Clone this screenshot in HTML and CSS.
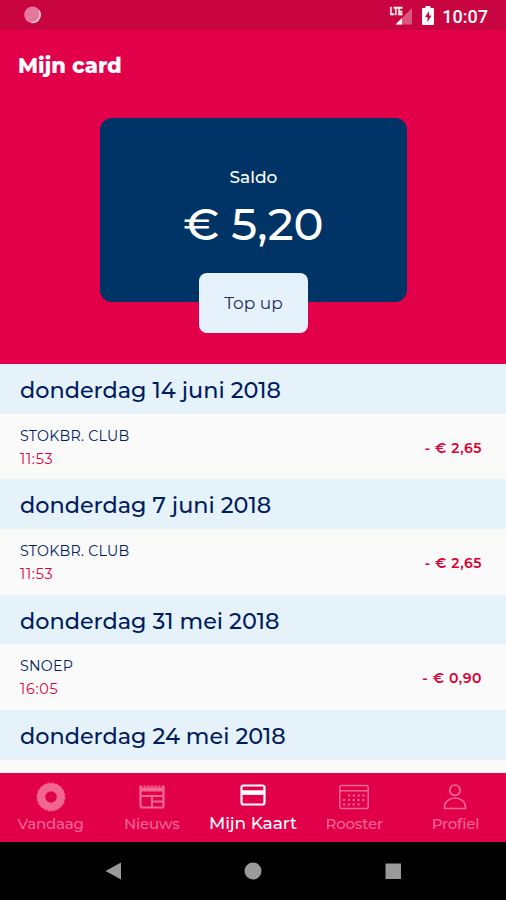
FILE: index.html
```
<!DOCTYPE html>
<html lang="nl">
  <head>
    <meta charset="UTF-8" />
    <meta name="viewport" content="width=device-width, initial-scale=1.0" />
    <title>Mijn card</title>
    <link rel="stylesheet" href="styles.css" />
  </head>
  <body>
    <div class="status">
      <svg width="18" height="18" viewBox="0 0 18 18">
        <circle cx="8.500" cy="8.800" r="8.300" fill="#e5799d" />
        <path d="M15 4.500A8 8 0 0 1 7.500 16.500" fill="none" stroke="#f8d3de" stroke-width="1.400" />
      </svg>
      <div class="status-right">
        <svg width="24" height="20" viewBox="0 0 24 20">
          <path d="M23 2v16.500H6.500z" fill="#dc5580" />
          <path d="M13 12v6.500H6.500z" fill="#fff" />
          <text class="lte" x="1" y="8.500" textLength="12.500" lengthAdjust="spacingAndGlyphs">LTE</text>
        </svg>
        <svg class="battery" width="12" height="19" viewBox="0 0 12 19">
          <path d="M3.500 0h5v2H11q1 0 1 1v15q0 1-1 1H1q-1 0-1-1V3q0-1 1-1h2.500z" fill="#fff" />
          <path d="M7 5L3 11h2.500v5L9.500 9.500H7z" fill="#c90541" />
        </svg>
        <span class="clock">10:07</span>
      </div>
    </div>

    <div class="header">
      <h1>Mijn card</h1>
      <div class="card">
        <div class="saldo">Saldo</div>
        <div class="amount">€ 5,20</div>
        <button class="topup">Top up</button>
      </div>
    </div>

    <div class="list">
      <h2>donderdag 14 juni 2018</h2>
      <div class="row">
        <div>
          <div class="name">STOKBR. CLUB</div>
          <div class="time">11:53</div>
        </div>
        <div class="price">- € 2,65</div>
      </div>
      <h2>donderdag 7 juni 2018</h2>
      <div class="row">
        <div>
          <div class="name">STOKBR. CLUB</div>
          <div class="time">11:53</div>
        </div>
        <div class="price">- € 2,65</div>
      </div>
      <h2>donderdag 31 mei 2018</h2>
      <div class="row">
        <div>
          <div class="name">SNOEP</div>
          <div class="time">16:05</div>
        </div>
        <div class="price">- € 0,90</div>
      </div>
      <h2>donderdag 24 mei 2018</h2>
    </div>

    <div class="tabs">
      <div class="tab">
        <svg width="30" height="30" viewBox="0 0 30 30">
          <circle cx="15" cy="15" r="9.800" fill="none" stroke="currentColor" stroke-width="8" />
          <circle cx="15" cy="15" r="14" fill="none" stroke="currentColor" stroke-width="1" stroke-dasharray="2.800 1.600" />
        </svg>
        <span>Vandaag</span>
      </div>
      <div class="tab">
        <svg width="30" height="30" viewBox="0 0 30 30" fill="none" stroke="currentColor" stroke-width="2.200">
          <path d="M3.500 4v19.500q0 2 2 2h19q2 0 2-2V4" />
          <path d="M3 4.500h24" stroke-dasharray="2.400 1.200" />
          <path d="M3 7.500h24" stroke-width="4" />
          <path d="M4 14h22M15 14v11M15 19.500h11" />
        </svg>
        <span>Nieuws</span>
      </div>
      <div class="tab active">
        <svg width="30" height="30" viewBox="0 0 30 30">
          <rect x="3.500" y="3.500" width="23" height="19" rx="2" fill="none" stroke="currentColor" stroke-width="2.200" />
          <path d="M3 8.300h24v4.600H3z" fill="currentColor" />
        </svg>
        <span>Mijn Kaart</span>
      </div>
      <div class="tab">
        <svg width="30" height="30" viewBox="0 0 30 30" fill="none" stroke="currentColor" stroke-width="1.500">
          <rect x=".8" y="3.500" width="28.400" height="23" rx="1.500" />
          <path d="M1 8.800h28" />
          <path d="M9 13.500h18M4 18h23M4 22.500h18" stroke-width="2.200" stroke-dasharray="2.200 2.600" />
        </svg>
        <span>Rooster</span>
      </div>
      <div class="tab">
        <svg width="30" height="30" viewBox="0 0 30 30" fill="none" stroke="currentColor" stroke-width="1.700">
          <circle cx="15" cy="8.200" r="5.200" />
          <path d="M4.500 26.500v-1.500a10.500 9 0 0 1 21 0v1.500z" stroke-linejoin="round" />
        </svg>
        <span>Profiel</span>
      </div>
    </div>

    <div class="navbar">
      <svg width="18" height="18" viewBox="0 0 18 18"><path d="M1.500 9L17 .5v17z" /></svg>
      <svg width="18" height="18" viewBox="0 0 18 18"><circle cx="9" cy="9" r="8.500" /></svg>
      <svg width="18" height="18" viewBox="0 0 18 18"><rect x="1.500" y="1.500" width="15.500" height="15.500" /></svg>
    </div>
  </body>
</html>
```
FILE: styles.css
```
* {
  box-sizing: border-box;
}
body {
  margin: 0;
  height: 900px;
  display: flex;
  flex-direction: column;
  overflow: hidden;
  background: #fafafa;
  color: #001c5e;
  font-family: Montserrat, Inter, sans-serif;
}

.status {
  height: 30px;
  flex: none;
  display: flex;
  justify-content: space-between;
  padding: 6px 18px 0 24px;
  background: #c90541;
  color: #fff;
}
.status-right {
  display: flex;
}
.battery {
  margin-left: 9px;
}
.lte {
  font: bold 10px "Liberation Sans", sans-serif;
  fill: #fff;
  stroke: #fff;
  stroke-width: 0.4px;
}
.clock {
  margin-left: 8px;
  font: 500 18px/21px Roboto, sans-serif;
}

.header {
  height: 334px;
  flex: none;
  background: #e2004b;
  color: #fff;
}
h1 {
  margin: 0;
  padding: 21px 18px 0;
  font-size: 21px;
  line-height: 30px;
  font-weight: 800;
}
.card {
  position: relative;
  width: 307px;
  height: 184px;
  margin: 37px 0 0 100px;
  padding-top: 46px;
  border-radius: 12px;
  background: #003366;
  text-align: center;
}
.saldo {
  font-size: 17px;
  line-height: 26px;
  font-weight: 500;
}
.amount {
  font-size: 45px;
  line-height: 56px;
  margin-top: 6px;
  font-weight: 500;
}
.topup {
  position: absolute;
  left: 99px;
  top: 155px;
  width: 109px;
  height: 60px;
  padding: 0;
  border: 0;
  border-radius: 8px;
  background: #e6f2fb;
  color: #172c64;
  font-family: inherit;
  font-size: 17px;
}

.list {
  height: 408.5px;
  flex: none;
  overflow: hidden;
}
h2 {
  margin: 0;
  height: 49.6px;
  padding-left: 20px;
  background: #e5f2fa;
  font-size: 22.35px;
  line-height: 53px;
  font-weight: 500;
}
.row {
  height: 65.8px;
  display: flex;
  justify-content: space-between;
  padding: 10px 24px 0 20px;
}
.name {
  padding-top: 1px;
  font-size: 14.2px;
  line-height: 23px;
  letter-spacing: 0.25px;
}
.time {
  font-size: 14.5px;
  line-height: 23px;
  letter-spacing: 0.7px;
  color: #e2003f;
}
.price {
  font-size: 14px;
  line-height: 48px;
  font-weight: 600;
  letter-spacing: 0.55px;
  color: #dc0035;
}

.tabs {
  height: 69.5px;
  flex: none;
  display: grid;
  grid-template-columns: repeat(5, 1fr);
  background: #e2004b;
  color: #f26791;
}
.tab {
  display: flex;
  flex-direction: column;
  align-items: center;
  padding-top: 9.5px;
  font-size: 15px;
  line-height: 24px;
  font-weight: 500;
  letter-spacing: -0.2px;
  white-space: nowrap;
}
.active {
  color: #fff;
  font-size: 17px;
  line-height: 23px;
  letter-spacing: -0.05px;
}

.navbar {
  flex: 1;
  display: flex;
  justify-content: space-between;
  align-items: center;
  padding: 0 104px;
  background: #000;
  fill: #9a9a9a;
}
```
